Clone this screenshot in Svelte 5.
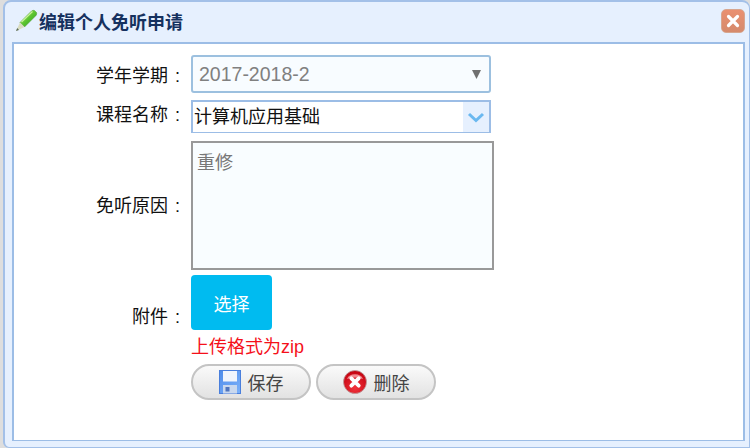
<script>
  let term = '2017-2018-2';
  let course = '计算机应用基础';
  let reason = '重修';
</script>

<div class="win">
  <div class="head">
    <svg class="pencil" width="23" height="23" viewBox="0 0 23 23">
      <defs>
        <linearGradient id="pen" x1="0" y1="0" x2="1" y2="1">
          <stop offset="0" stop-color="#a8e860"/>
          <stop offset="0.55" stop-color="#55c02c"/>
          <stop offset="1" stop-color="#2f8f2a"/>
        </linearGradient>
      </defs>
      <path d="M5 13.500 L16.500 2 Q18 0.800 19.500 1.500 L21.500 3.500 Q22.300 5 21 6.500 L9.500 18 Z" fill="url(#pen)" stroke="#4c9a35" stroke-width="0.500"/>
      <path d="M6.500 13 L17.500 2.500" stroke="#c9f29a" stroke-width="1.300"/>
      <path d="M5 13.500 L9.500 18 L1 22 Z" fill="#d9dcc0"/>
      <path d="M2.200 19 L4 20.900 L1 22 Z" fill="#5a6a55"/>
    </svg>
    <span class="title">编辑个人免听申请</span>
    <span class="close">
      <svg width="14" height="14" viewBox="0 0 14 14"><path d="M2.500 2.500 L11.500 11.500 M11.500 2.500 L2.500 11.500" stroke="#fff" stroke-width="3.200" stroke-linecap="round"/></svg>
    </span>
  </div>
  <div class="panel">
    <form class="form">
      <div class="label">学年学期 :</div>
      <div class="select">
        <span>{term}</span>
        <svg width="9" height="9" viewBox="0 0 9 9"><path d="M0 0 H9 L4.500 9 Z" fill="#707070"/></svg>
      </div>

      <div class="label">课程名称 :</div>
      <div class="combo">
        <span class="combo-text">{course}</span>
        <span class="combo-arrow">
          <svg width="18" height="11" viewBox="0 0 18 11"><path d="M2 2 L9 8.500 L16 2" fill="none" stroke="#6ab8f0" stroke-width="3"/></svg>
        </span>
      </div>

      <div class="label reason">免听原因 :</div>
      <div class="area">{reason}</div>

      <div class="label attach">附件 :</div>
      <div class="pick">选择</div>

      <div></div>
      <div class="note">上传格式为zip</div>

      <div></div>
      <div class="actions">
        <div class="btn">
          <svg width="22" height="24" viewBox="0 0 22 24">
            <defs>
              <linearGradient id="disk" x1="0" y1="0" x2="1" y2="1">
                <stop offset="0" stop-color="#4f8cea"/>
                <stop offset="1" stop-color="#7cb2fa"/>
              </linearGradient>
            </defs>
            <rect x="0.500" y="0.500" width="21" height="23" fill="url(#disk)" stroke="#4a7fdc"/>
            <rect x="4" y="1" width="14" height="10.500" fill="#f1f5fc"/>
            <rect x="4" y="15" width="14" height="8.500" fill="#c9d8ee"/>
            <rect x="6.500" y="17" width="4" height="4.500" fill="#4f74bd"/>
          </svg>
          <span>保存</span>
        </div>
        <div class="btn">
          <svg width="24" height="24" viewBox="0 0 24 24">
            <defs>
              <radialGradient id="ball" cx="0.500" cy="0.750" r="0.750">
                <stop offset="0" stop-color="#f2333c"/>
                <stop offset="1" stop-color="#c2000e"/>
              </radialGradient>
            </defs>
            <circle cx="12" cy="12" r="11.500" fill="url(#ball)" stroke="#b9a0a0" stroke-width="0.800"/>
            <path d="M4 9 A 8.500 7 0 0 1 20 9 Q12 6 4 9 Z" fill="#f08a90"/>
            <path d="M8.300 8.300 L15.700 15.700 M15.700 8.300 L8.300 15.700" stroke="#fff" stroke-width="3.800" stroke-linecap="round"/>
          </svg>
          <span>删除</span>
        </div>
      </div>
    </form>
  </div>
</div>

<style>
  :global(body) {
    background: #dedede;
    font-family: "Liberation Sans", "Noto Sans CJK SC", sans-serif;
  }

  .win {
    width: 747px;
    height: 448px;
    box-sizing: border-box;
    margin-left: 3px;
    padding: 0 4px 6px 7px;
    background: #e6f0fe;
    border: 2px solid #a3c0e8;
    border-right-width: 1px;
    border-bottom-width: 1px;
    border-radius: 8px 8px 0 6px;
    display: flex;
    flex-direction: column;
  }

  .head {
    height: 40px;
    box-sizing: border-box;
    padding-bottom: 3px;
    flex: none;
    display: flex;
    align-items: center;
    gap: 1px;
    margin-left: 3px;
  }

  .pencil { margin-top: -1px; }

  .title {
    font-size: 18px;
    font-weight: bold;
    color: #15315f;
  }

  .close {
    margin-left: auto;
    margin-top: 1px;
    width: 24px;
    height: 24px;
    border-radius: 5px;
    background: linear-gradient(#ea9070, #d58a6c);
    border: 1px solid #d7a68f;
    box-sizing: border-box;
    display: flex;
    align-items: center;
    justify-content: center;
  }

  .panel {
    flex: 1;
    background: #fff;
    border: 2px solid #9cbde6;
    border-bottom-width: 1px;
    padding-top: 11px;
  }

  .form {
    display: grid;
    grid-template-columns: 177px auto;
    justify-content: start;
    align-items: center;
    font-size: 18px;
    color: #111;
  }

  .label {
    text-align: right;
    white-space: nowrap;
    padding-right: 11px;
    word-spacing: 2px;
  }

  .reason {
    padding-top: 4px;
  }

  .attach {
    padding-top: 29px;
  }

  .select {
    width: 300px;
    height: 38px;
    box-sizing: border-box;
    border: 2px solid #9cc0df;
    border-radius: 3px;
    background: #f8fcff;
    display: flex;
    align-items: center;
    justify-content: space-between;
    padding: 0 8px 0 6px;
    font-size: 19.5px;
    color: #808080;
  }

  .combo {
    width: 300px;
    height: 33px;
    margin-top: 7px;
    box-sizing: border-box;
    border: 2px solid #9cbde6;
    border-bottom-width: 1px;
    display: flex;
    align-items: stretch;
    font-size: 18px;
    color: #111;
  }

  .combo-text {
    flex: 1;
    padding-left: 1px;
    line-height: 30px;
  }

  .combo-arrow {
    width: 26px;
    background: #e6f0fe;
    display: flex;
    align-items: center;
    justify-content: center;
  }

  .area {
    width: 303px;
    height: 129px;
    margin-top: 8px;
    box-sizing: border-box;
    border: 2px solid #999;
    background: #f9fdff;
    padding: 7px 4px;
    font-size: 18px;
    line-height: 22px;
    color: #777;
    font-family: "Noto Sans CJK JP", serif;
  }

  .pick {
    width: 81px;
    height: 55px;
    margin-top: 5px;
    border-radius: 4px;
    background: #00bbf0;
    color: #fff;
    font-size: 18px;
    display: flex;
    align-items: center;
    justify-content: center;
  }

  .note {
    margin-top: 5px;
    font-size: 18px;
    line-height: 24px;
    color: #f5101a;
  }

  .actions {
    display: flex;
    gap: 5px;
    margin-top: 5px;
  }

  .btn {
    width: 120px;
    height: 36px;
    box-sizing: border-box;
    border: 2px solid #c4c4c4;
    border-radius: 18px;
    background: linear-gradient(#fafafa, #e2e2e2);
    display: flex;
    align-items: center;
    justify-content: center;
    gap: 7px;
    font-size: 18px;
    color: #444;
  }
</style>
